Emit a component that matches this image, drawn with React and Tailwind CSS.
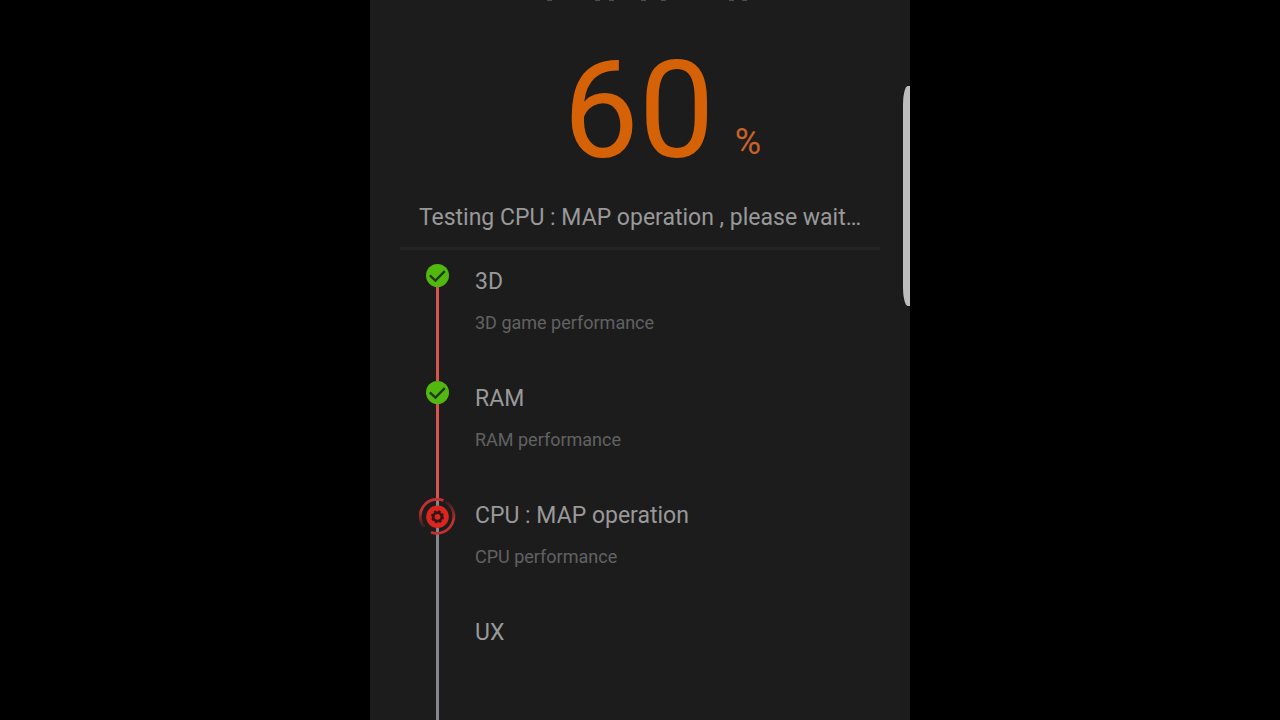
import React from 'react';

const steps = [
  { title: '3D', detail: '3D game performance', state: 'done' },
  { title: 'RAM', detail: 'RAM performance', state: 'done' },
  { title: 'CPU : MAP operation', detail: 'CPU performance', state: 'running' },
  { title: 'UX', detail: '', state: 'waiting' },
];

const DoneIcon = () => (
  <svg className="h-[23px] w-[23px] shrink-0" viewBox="0 0 24 24" aria-hidden="true">
    <circle cx="12" cy="12" r="12" fill="#52b80f" />
    <path d="M4 11.8 9.8 17.4 19.6 7.4" fill="none" stroke="#1c3a16" strokeWidth="2.4" />
  </svg>
);

const RunningIcon = () => (
  <svg className="h-[37px] w-[37px] shrink-0" viewBox="0 0 37 37" aria-hidden="true">
    <defs>
      <linearGradient id="tailLeft" x1="0" y1="0" x2="0" y2="1">
        <stop offset="0.4" stopColor="#c4302f" />
        <stop offset="1" stopColor="#c4302f" stopOpacity="0.15" />
      </linearGradient>
      <linearGradient id="tailRight" x1="0" y1="0" x2="0" y2="1">
        <stop offset="0" stopColor="#c4302f" stopOpacity="0.15" />
        <stop offset="0.6" stopColor="#c4302f" />
      </linearGradient>
    </defs>
    <path d="M17 0h3v2h-3z" fill="#d9534f" />
    <path d="M17 2h3v35h-3z" fill="#85858c" />
    <path d="M24.5 2.5A17 17 0 0 0 5 29" fill="none" stroke="url(#tailLeft)" strokeWidth="2.8" />
    <path d="M26.5 3.6A17 17 0 0 1 12 34.2" fill="none" stroke="url(#tailRight)" strokeWidth="2.8" />
    <circle cx="18.5" cy="18.8" r="11.3" fill="#dc251f" />
    <circle cx="18.5" cy="18.8" r="4.2" fill="none" stroke="#301716" strokeWidth="2.6" />
    <circle cx="18.5" cy="18.8" r="5.6" fill="none" stroke="#301716" strokeWidth="1.8" strokeDasharray="2.4 2" />
  </svg>
);

const Step = ({ title, detail, state }) => (
  <li className="flex h-[117px]">
    <div className="flex w-[75px] shrink-0 flex-col items-center">
      {state === 'done' && <DoneIcon />}
      {state === 'running' && <RunningIcon />}
      <span className={`w-[3px] flex-1 ${state === 'done' ? 'bg-[#d9534f]' : 'bg-[#85858c]'}`} />
    </div>
    <div>
      <h2 className="text-[23px] leading-[36px] text-[#999999]">{title}</h2>
      <p className="mt-2.5 text-[18px] leading-[26px] text-[#626262]">{detail}</p>
    </div>
  </li>
);

const App = () => {
  return (
    <div className="flex h-screen justify-center overflow-hidden bg-black font-['Roboto',sans-serif]">
      <main className="relative w-full max-w-[540px] overflow-hidden bg-[#1c1c1c] px-[30px]">

        {/* lower edge of the scrolled heading */}
        <svg className="mx-auto block h-5 w-[220px]" viewBox="0 0 220 20" aria-hidden="true">
          <path d="M17 0h5M65 0h5M79 0h5M111 0h5M131 0h5M199 0h5M212 0h5" stroke="#4c4c4c" strokeWidth="2" />
        </svg>

        {/* progress */}
        <div className="flex items-end justify-center gap-5 pl-11 pt-3">
          <span className="text-[135px] leading-[158px] text-[#d66207]">60</span>
          <span className="mb-[30px] text-[36px] leading-9 text-[#c8622a]">%</span>
        </div>

        <p className="border-b-3 border-[#242424] pb-[13px] pt-3 text-center text-[23px] leading-8 text-[#999999]">
          Testing CPU : MAP operation , please wait…
        </p>

        <ul className="mt-3.5">
          {steps.map((step) => (
            <Step key={step.title} {...step} />
          ))}
        </ul>

        {/* scroll thumb */}
        <div className="absolute right-0 top-[86px] h-[220px] w-[7px] rounded-l-[5px_18px] bg-[#bdbdbd]" />
      </main>
    </div>
  );
};

export default App;
